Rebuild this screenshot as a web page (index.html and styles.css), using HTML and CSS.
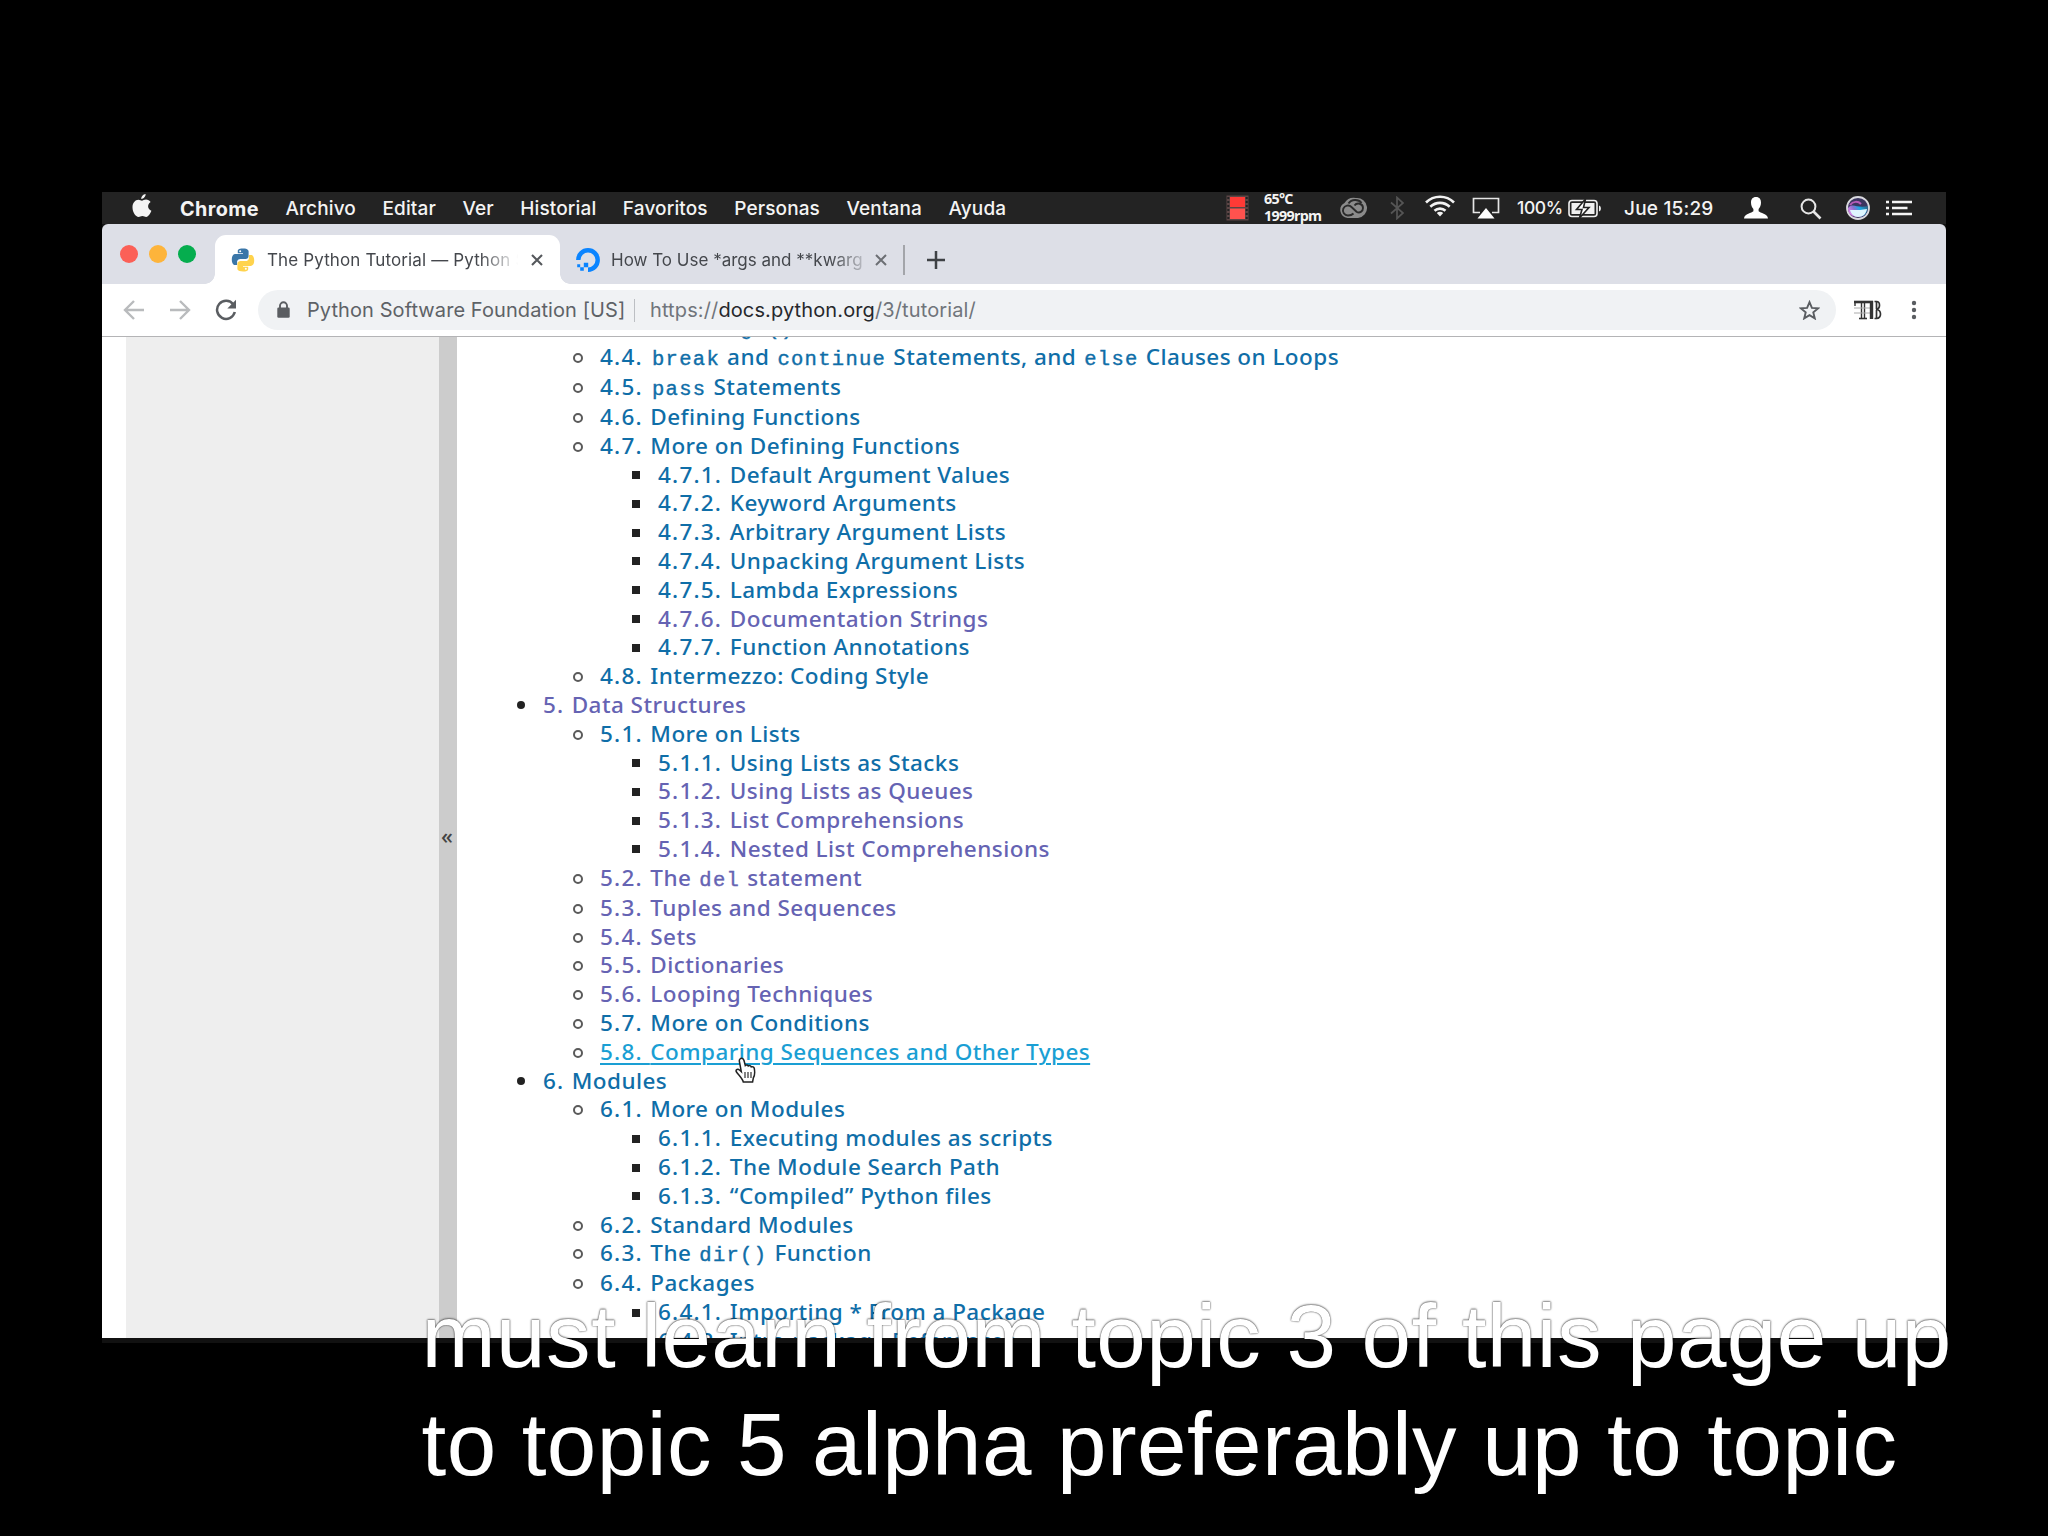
FILE: index.html
```
<!DOCTYPE html>
<html lang="es">
<head>
<meta charset="utf-8">
<title>The Python Tutorial</title>
<link rel="stylesheet" href="styles.css">
</head>
<body>
<div class="screen">
  <header class="menubar">
    <svg class="apple" width="20" height="24" viewBox="0 0 20 24"><path fill="#f4f4f4" d="M13.6 0c.2 2.400-1.900 4.900-4.300 4.900C9 2.600 11.200.3 13.600 0zM9.900 6.700c1.100 0 2.200-1.100 4.100-1.100 1.900 0 3.600.9 4.600 2.400-3.700 2.300-3.100 7.300.8 8.800-.9 2.600-3 6.100-5.200 6.100-1.500 0-2-.9-3.800-.9s-2.400.9-3.800.9C3.700 22.900.5 18.200.5 13.500c0-4.600 2.700-7.700 5.900-7.700 1.500 0 2.600.9 3.500.9z"/></svg>
    <nav class="menus">
      <b>Chrome</b><span>Archivo</span><span>Editar</span><span>Ver</span><span>Historial</span><span>Favoritos</span><span>Personas</span><span>Ventana</span><span>Ayuda</span>
    </nav>
    <div class="status">
      <svg class="film" width="24" height="26" viewBox="0 0 24 26"><rect x=".5" y=".5" width="22" height="25" fill="#5c4646"/><path d="M2.300 2v23M20.700 2v23" stroke="#222" stroke-width="2" stroke-dasharray="2 2"/><rect x="4" y="2" width="15" height="10" fill="#ff3a36"/><rect x="4" y="13.500" width="15" height="10.500" fill="#ff524e"/></svg>
      <div class="sensor"><span>65°C</span><span>1999rpm</span></div>
      <svg class="cloud" width="29" height="22" viewBox="0 0 29 22"><path d="M8.500 21A8 8 0 0 1 5.500 6 11 11 0 0 1 17 1a10 10 0 1 1 2 20z" fill="#8b8b8b"/><g fill="none" stroke="#2b2b2b" stroke-width="1.900"><path d="M14.500 16.500c-1.500 1.500-3.500 2-5.500 2A5 5 0 1 1 12.500 10l5 4.700c3 2 6.500-.2 6.500-3.700 0-4.500-6-6-8.500-2.500"/><path d="M9.500 6.500c3-4.500 10-4.500 13-.5"/></g></svg>
      <svg class="bt" width="14" height="24" viewBox="0 0 14 24"><path d="M1 6.500l12 10.500-6 5.500V1.500l6 5.500L1 17.500" fill="none" stroke="#555" stroke-width="1.700"/></svg>
      <svg class="wifi" width="30" height="22" viewBox="0 0 30 22"><g fill="none" stroke="#f2f2f2" stroke-width="2.600"><path d="M1 7.500a20 20 0 0 1 28 0"/><path d="M5.300 11.800a14 14 0 0 1 19.400 0"/><path d="M9.500 15.800a8 8 0 0 1 11 0"/></g><path d="M15 21.500l-3.200-3.400a4.600 4.600 0 0 1 6.400 0z" fill="#f2f2f2"/></svg>
      <svg class="airplay" width="28" height="22" viewBox="0 0 28 22"><path d="M8 15.500H1.500V1.500h25v14H20" fill="none" stroke="#e6e6e6" stroke-width="1.700"/><path d="M14 11l8.500 10.500h-17z" fill="#fff"/></svg>
      <span class="percent">100%</span>
      <svg class="battery" width="34" height="19" viewBox="0 0 34 19"><rect x="1" y="1.500" width="28" height="16" rx="3" fill="none" stroke="#f0f0f0" stroke-width="1.600"/><path d="M31 6.500c2.500.5 2.500 5.500 0 6z" fill="#f0f0f0"/><rect x="3.500" y="4" width="23" height="11" fill="#f0f0f0"/><path d="M17.500 0L8.500 10.500h5.500L11.500 19l9.500-10.500h-5.500z" fill="#fff" stroke="#232323" stroke-width="1.600"/></svg>
      <span class="clock">Jue 15:29</span>
      <svg class="user" width="24" height="22" viewBox="0 0 24 22"><path d="M12 0c3.500 0 5 2.300 5 5.600 0 3-1 4.900-2.400 6.400v2.300c1.500 1.700 9 2.300 9.400 7.200H0c.4-4.900 7.900-5.500 9.400-7.200V12C8 10.500 7 8.600 7 5.600 7 2.300 8.500 0 12 0z" fill="#fff"/></svg>
      <svg class="search" width="22" height="22" viewBox="0 0 22 22"><circle cx="8.500" cy="8.500" r="6.900" fill="none" stroke="#e6e6e6" stroke-width="2"/><path d="M13.500 13.500l7 7" stroke="#e6e6e6" stroke-width="2.600"/></svg>
      <svg class="siri" width="24" height="24" viewBox="0 0 24 24"><defs><linearGradient id="s" x1="0" x2="1" y1=".7" y2=".3"><stop offset="0" stop-color="#f08cf2"/><stop offset=".4" stop-color="#8d6fd0"/><stop offset=".65" stop-color="#1ba8e6"/><stop offset="1" stop-color="#2b6b92"/></linearGradient></defs><circle cx="12" cy="12" r="11" fill="#3b3560" stroke="#d9d9df" stroke-width="1.800"/><path d="M2 12c5-6 9 1 20-2 0 6-3 11-10 11S2 17 2 12z" fill="url(#s)"/><path d="M4 14c5 0 8 .5 17-1-1 5-4 8-9 8-4 0-7-3-8-7z" fill="#dff6ff"/><path d="M4 9c3-4 8-4 11-1" stroke="#b55ab8" stroke-width="2" fill="none"/></svg>
      <svg class="lines" width="27" height="16" viewBox="0 0 27 16"><path d="M0 2h3M0 8h3M0 14h3M6 2h20M6 8h15.500M6 14h20" stroke="#f4f4f4" stroke-width="2.600"/></svg>
    </div>
  </header>

  <div class="tabstrip">
    <div class="lights"><i class="red"></i><i class="amber"></i><i class="green"></i></div>
    <div class="tab active">
      <svg width="24" height="24" viewBox="0 0 24 24"><path fill="#3a76a8" d="M11.900.5C6.500.5 6.800 2.800 6.800 2.800v2.500H12v.8H4.600S.8 5.700.8 11.500s3.300 5.500 3.300 5.500h2v-2.700s-.1-3.300 3.200-3.300h5.200s3.100 0 3.100-3V3.500s.5-3-5.700-3z"/><circle cx="9.200" cy="3.300" r="1" fill="#fff"/><path fill="#ffd34d" d="M12.100 23.500c5.400 0 5.100-2.300 5.100-2.300v-2.500H12v-.8h7.400s3.800.4 3.800-5.400-3.300-5.500-3.300-5.500h-2v2.700s.1 3.300-3.200 3.300H9.500s-3.100 0-3.100 3v4.500s-.5 3 5.700 3z"/><circle cx="14.800" cy="20.700" r="1" fill="#fff"/></svg>
      <span class="title">The Python Tutorial — Python S</span>
      <svg class="close" width="12" height="12" viewBox="0 0 12 12"><path d="M1 1l10 10M11 1L1 11" stroke="#55585c" stroke-width="2.100"/></svg>
    </div>
    <div class="tab">
      <svg width="24" height="24" viewBox="0 0 24 24"><path d="M2.300 12A9.700 9.700 0 1 1 12 21.700" fill="none" stroke="#0a84ff" stroke-width="4.400"/><path d="M7.800 14.800h4.400v4.400H7.800zM4.200 19.200h3.600v3.600H4.200zM1.200 16.200h3v3h-3z" fill="#0a84ff"/></svg>
      <span class="title">How To Use *args and **kwarg</span>
      <svg class="close" width="12" height="12" viewBox="0 0 12 12"><path d="M1 1l10 10M11 1L1 11" stroke="#6c6f74" stroke-width="2"/></svg>
    </div>
    <i class="divider"></i>
    <svg class="plus" width="18" height="18" viewBox="0 0 18 18"><path d="M9 0v18M0 9h18" stroke="#3e4145" stroke-width="2.500"/></svg>
  </div>

  <div class="toolbar">
    <svg class="back" width="22" height="20" viewBox="0 0 22 20"><path d="M21 10H2.500M11 1l-9 9 9 9" fill="none" stroke="#b9bbbd" stroke-width="2.400"/></svg>
    <svg class="fwd" width="22" height="20" viewBox="0 0 22 20"><path d="M1 10h18.500M11 1l9 9-9 9" fill="none" stroke="#b9bbbd" stroke-width="2.400"/></svg>
    <svg class="reload" width="22" height="22" viewBox="0 0 22 22"><path d="M18.300 5.500A9 9 0 1 0 19.800 13" fill="none" stroke="#5a5d61" stroke-width="2.500"/><path d="M21 .8v8.700h-8.700z" fill="#5a5d61"/></svg>
    <div class="omnibox">
      <svg class="lock" width="13" height="18" viewBox="0 0 13 18"><rect x=".3" y="6.500" width="12.400" height="10.300" rx="1.300" fill="#5a5d61"/><path d="M3 7V4.800a3.500 3.500 0 0 1 7 0V7" fill="none" stroke="#5a5d61" stroke-width="1.900"/></svg>
      <span class="owner">Python Software Foundation [US]</span>
      <i class="bar"></i>
      <span class="url">https://<em>docs.python.org</em>/3/tutorial/</span>
      <svg class="star" width="21" height="20" viewBox="0 0 21 20"><path d="M10.500 2.200l2.400 5.700 6.100.5-4.700 4 1.500 6-5.300-3.200-5.300 3.200 1.500-6-4.700-4 6.100-.5z" fill="none" stroke="#5a5d61" stroke-width="1.900"/></svg>
    </div>
    <svg class="tb" width="28" height="20" viewBox="0 0 28 20"><g fill="none" stroke="#333"><path d="M0 2h19" stroke-width="2.600"/><path d="M1 1v5M7.500 2v16M10.500 2v16" stroke-width="1.400"/><path d="M0 8h16M0 13h16" stroke="#aaa" stroke-width="1"/><path d="M5 18.500h8" stroke-width="1.600"/><path d="M17.500 1v18" stroke-width="3.400"/><path d="M20.500 1.500h2q3 0 3 3.700T22 9.500q4.500.3 4.500 4.500t-4 4.500h-2M22.500 2v7M22.500 10v8" stroke-width="1.700"/></g></svg>
    <svg class="dots" width="6" height="20" viewBox="0 0 6 20"><g fill="#5a5d61"><circle cx="3" cy="3" r="2.200"/><circle cx="3" cy="10" r="2.200"/><circle cx="3" cy="17" r="2.200"/></g></svg>
  </div>

  <main class="page">
    <aside class="sidebar"></aside>
    <div class="handle">«</div>
    <ul class="toc">
      <li class="l2 tall"><a><b>4.3. </b>The <code>range()</code> Function</a></li>
      <li class="l2 tall"><a><b>4.4. </b><code>break</code> and <code>continue</code> Statements, and <code>else</code> Clauses on Loops</a></li>
      <li class="l2 tall"><a><b>4.5. </b><code>pass</code> Statements</a></li>
      <li class="l2"><a><b>4.6. </b>Defining Functions</a></li>
      <li class="l2"><a><b>4.7. </b>More on Defining Functions</a></li>
      <li class="l3"><a><b>4.7.1. </b>Default Argument Values</a></li>
      <li class="l3"><a><b>4.7.2. </b>Keyword Arguments</a></li>
      <li class="l3"><a><b>4.7.3. </b>Arbitrary Argument Lists</a></li>
      <li class="l3"><a><b>4.7.4. </b>Unpacking Argument Lists</a></li>
      <li class="l3"><a><b>4.7.5. </b>Lambda Expressions</a></li>
      <li class="l3"><a class="seen"><b>4.7.6. </b>Documentation Strings</a></li>
      <li class="l3"><a><b>4.7.7. </b>Function Annotations</a></li>
      <li class="l2"><a><b>4.8. </b>Intermezzo: Coding Style</a></li>
      <li class="l1"><a class="seen"><b>5. </b>Data Structures</a></li>
      <li class="l2"><a><b>5.1. </b>More on Lists</a></li>
      <li class="l3"><a><b>5.1.1. </b>Using Lists as Stacks</a></li>
      <li class="l3"><a class="seen"><b>5.1.2. </b>Using Lists as Queues</a></li>
      <li class="l3"><a class="seen"><b>5.1.3. </b>List Comprehensions</a></li>
      <li class="l3"><a class="seen"><b>5.1.4. </b>Nested List Comprehensions</a></li>
      <li class="l2 tall"><a class="seen"><b>5.2. </b>The <code>del</code> statement</a></li>
      <li class="l2"><a class="seen"><b>5.3. </b>Tuples and Sequences</a></li>
      <li class="l2"><a class="seen"><b>5.4. </b>Sets</a></li>
      <li class="l2"><a class="seen"><b>5.5. </b>Dictionaries</a></li>
      <li class="l2"><a class="seen"><b>5.6. </b>Looping Techniques</a></li>
      <li class="l2"><a><b>5.7. </b>More on Conditions</a></li>
      <li class="l2"><a class="hover"><b>5.8. </b>Comparing Sequences and Other Types</a></li>
      <li class="l1"><a><b>6. </b>Modules</a></li>
      <li class="l2"><a><b>6.1. </b>More on Modules</a></li>
      <li class="l3"><a><b>6.1.1. </b>Executing modules as scripts</a></li>
      <li class="l3"><a><b>6.1.2. </b>The Module Search Path</a></li>
      <li class="l3"><a><b>6.1.3. </b>“Compiled” Python files</a></li>
      <li class="l2"><a><b>6.2. </b>Standard Modules</a></li>
      <li class="l2 tall"><a><b>6.3. </b>The <code>dir()</code> Function</a></li>
      <li class="l2"><a><b>6.4. </b>Packages</a></li>
      <li class="l3"><a><b>6.4.1. </b>Importing * From a Package</a></li>
      <li class="l3"><a><b>6.4.2. </b>Intra-package References</a></li>
    </ul>
  </main>
</div>
<svg class="cursor" width="22" height="27" viewBox="0 0 22 27"><path d="M5 2c1.500-1.500 3.500-.5 4 1.500l1.300 5c1-1 2.700-.7 3 .5 1-.8 2.700-.3 3 .9 1.200-.6 2.700 0 3 1.600.6 3.500.7 7-1 9.500l-.7 4H8.300C7.500 21.500 3 17.500 1.200 14.500.5 12.500 3 11.500 4.500 13l1.800 1.700L4.400 4.500C4.200 3.500 4.300 2.600 5 2z" fill="#fff" stroke="#222" stroke-width="1.500"/><path d="M10 15v6M13 15v6M16 15v6" stroke="#333" stroke-width="1.200"/></svg>
<p class="caption"><span>must learn from topic 3 of this page up</span><span>to topic 5 alpha preferably up to topic</span></p>
</body>
</html>
```
FILE: styles.css
```
*, *::before, *::after { box-sizing: border-box; }
body {
  margin: 0;
  width: 2048px;
  height: 1536px;
  overflow: hidden;
  position: relative;
  background: #000;
  padding: 192px 102px 0;
  font-family: Inter, "Liberation Sans", sans-serif;
}
svg { display: block; flex: none; }
.screen {
  width: 1844px;
  height: 1151px;
  display: flex;
  flex-direction: column;
  background: #111;
  padding-bottom: 5px;
}

/* menu bar */
.menubar {
  height: 31.500px;
  flex: none;
  display: flex;
  align-items: center;
  background: #232323;
  color: #f4f4f4;
  font-size: 19px;
  font-weight: 500;
  line-height: 30px;
}
.apple { margin: 0 0 3px 30px; }
.menus { display: flex; gap: 26.500px; margin: 2px 0 0 28px; white-space: nowrap; letter-spacing: .13px; }
.menus b { font-weight: 700; font-size: 19.800px; letter-spacing: .4px; }
.status { display: flex; align-items: center; height: 31px; margin-left: auto; padding-right: 33px; }
.sensor {
  width: 60px;
  margin: -1px 0 0 14px;
  display: flex;
  flex-direction: column;
  font: 700 14.300px/17px "Open Sans", sans-serif;
  letter-spacing: -0.7px;
  white-space: nowrap;
}
.cloud { margin-left: 15px; }
.bt { margin-left: 22px; }
.wifi { margin: 0 0 3px 21px; }
.airplay { margin-left: 17px; }
.percent { width: 50px; margin: 1px 0 0 17px; font-size: 17.500px; letter-spacing: -0.35px; }
.battery { margin: 1px 0 0 1px; }
.clock { width: 93px; margin: 2px 0 0 22px; letter-spacing: .2px; white-space: nowrap; }
.user { margin-left: 27px; }
.search { margin: 2px 0 0 32px; }
.siri { margin-left: 24px; }
.lines { margin-left: 16px; }

/* tab strip */
.tabstrip {
  height: 60.500px;
  flex: none;
  display: flex;
  align-items: flex-end;
  background: #dddfe7;
  border-radius: 6px 6px 0 0;
}
.lights { display: flex; gap: 11px; width: 113px; padding: 0 0 21px 18px; }
.lights i { width: 18px; height: 18px; border-radius: 50%; }
.red { background: #fb6057; }
.amber { background: #fdb43b; }
.green { background: #05ad4e; }
.tab {
  height: 49px;
  width: 345px;
  display: flex;
  align-items: center;
  padding: 0 17px 0 16px;
  font-size: 17px;
  color: #44474c;
}
.tab.active { background: #fff; border-radius: 11px 11px 0 0; position: relative; }
.tab.active::before, .tab.active::after {
  content: "";
  position: absolute;
  bottom: 0;
  width: 10px;
  height: 10px;
}
.tab.active::before { left: -10px; background: radial-gradient(circle at 0 0, transparent 9.500px, #fff 10px); }
.tab.active::after { right: -10px; background: radial-gradient(circle at 100% 0, transparent 9.500px, #fff 10px); }
.tab + .tab { width: 344px; }
.tab.active .title { letter-spacing: .13px; }
.title {
  width: 254px;
  margin: 0 10px 0 12px;
  white-space: nowrap;
  line-height: 24px;
  -webkit-mask-image: linear-gradient(90deg, #000 84%, transparent 99%);
  mask-image: linear-gradient(90deg, #000 84%, transparent 99%);
}
.tab + .tab .title {
  width: 253px;
  margin-left: 11px;
  margin-right: 12px;
  -webkit-mask-image: linear-gradient(90deg, #000 87%, transparent 104%);
  mask-image: linear-gradient(90deg, #000 87%, transparent 104%);
}
.divider { width: 1.500px; height: 30px; background: #a3a5aa; margin-bottom: 9px; margin-left: -1px; }
.plus { margin: 0 0 15px 22.500px; }

/* toolbar */
.toolbar {
  height: 53px;
  flex: none;
  display: flex;
  align-items: center;
  background: #fff;
  border-bottom: 1.500px solid #b4b4b6;
}
.back { margin-left: 21px; }
.fwd { margin-left: 24px; }
.reload { margin-left: 24px; }
.omnibox {
  margin-left: 20.500px;
  width: 1578px;
  height: 40px;
  border-radius: 20px;
  background: #f0f2f4;
  display: flex;
  align-items: center;
  font-size: 20px;
  color: #5e6267;
  white-space: nowrap;
}
.lock { margin-left: 19.500px; }
.owner { margin-left: 17px; width: 320px; letter-spacing: .08px; }
.bar { width: 1.500px; height: 23px; margin-left: 6.500px; background: #bcbfc3; }
.url { margin-left: 15px; letter-spacing: .12px; color: #70757b; }
.url em { font-style: normal; color: #26282c; }
.star { margin-left: auto; margin-right: 16px; }
.tb { margin-left: 18px; }
.dots { margin-left: 29px; }

/* document */
.page {
  flex: 1;
  display: flex;
  min-height: 0;
  overflow: hidden;
  background: #fff;
}
.sidebar { width: 313px; margin-left: 24px; background: #eee; flex: none; }
.handle {
  width: 18px;
  flex: none;
  background: #ccc;
  display: flex;
  align-items: center;
  justify-content: center;
  padding: 0 2px 6px 0;
  font: 500 22px "Noto Sans", sans-serif;
  color: #444;
}
.toc {
  list-style: none;
  margin: -24.300px 0 0;
  padding: 0 0 0 57px;
  font: 500 22.500px/28.800px "Noto Sans", sans-serif;
  letter-spacing: .45px;
  white-space: nowrap;
}
.toc li { height: 28.800px; display: flex; align-items: flex-start; }
.toc li.tall { height: 30.100px; }
.toc li::before { content: ""; flex: none; margin-top: 10.500px; }
.toc b { display: inline-block; font-weight: 500; letter-spacing: 1.200px; white-space: pre; text-decoration: inherit; }
.l1 b { width: 28.700px; }
.l2 b { width: 50.300px; }
.l3 b { width: 71.800px; }
.toc .l1::before { width: 8px; height: 8px; border-radius: 50%; background: #222; margin-left: 3px; margin-right: 18px; }
.toc .l2::before { width: 10px; height: 10px; border-radius: 50%; border: 2px solid #5a5a5a; margin: 10px 17px 0 59px; }
.toc .l3::before { width: 8px; height: 8px; background: #222; margin-left: 118px; margin-right: 18px; }
.toc a { color: #0f6ea8; }
.toc a.seen { color: #6563b3; }
.toc a.hover {
  color: #1a9fd4;
  text-decoration: underline;
  text-decoration-thickness: 1.500px;
  text-underline-offset: 3px;
}
.toc code {
  margin: 0 .8px 0 1.700px;
  font: 400 20.500px/20px "Liberation Mono", monospace;
  letter-spacing: 1.300px;
  -webkit-text-stroke: .4px currentColor;
}

/* pointer and subtitles lie over the screen */
.cursor { position: absolute; left: 735px; top: 1057px; }
.caption {
  position: absolute;
  left: 421.500px;
  top: 1282px;
  margin: 0;
  display: flex;
  flex-direction: column;
  font: 89px/108px "Liberation Sans", Arial, sans-serif;
  letter-spacing: .42px;
  color: #fff;
  white-space: nowrap;
  text-shadow: 0 0 1px rgba(0, 0, 0, .6), 0 0 2px rgba(0, 0, 0, .5), 0 -1px 2px rgba(0, 0, 0, .3);
}
```
